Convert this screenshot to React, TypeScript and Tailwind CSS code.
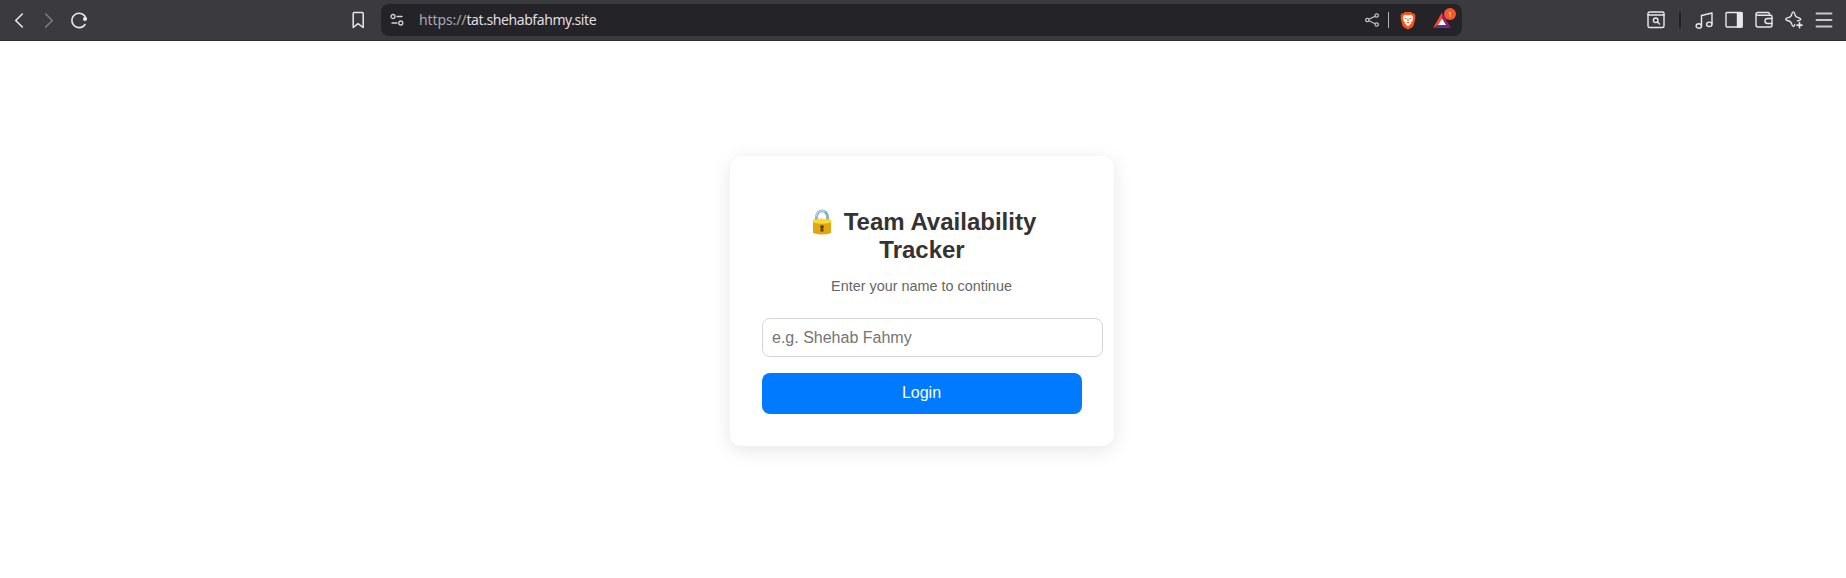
import React from "react";

type IconProps = { className?: string; children: React.ReactNode; w?: number; h?: number; sw?: number };

function Icon({ className = "text-[#e9e9ec]", children, w = 18, h = 18, sw = 1.4 }: IconProps) {
  return (
    <svg
      className={`block shrink-0 ${className}`}
      width={w}
      height={h}
      viewBox={`0 0 ${w} ${h}`}
      fill="none"
      stroke="currentColor"
      strokeWidth={sw}
      strokeLinecap="round"
      strokeLinejoin="round"
    >
      {children}
    </svg>
  );
}

function BraveLion() {
  return (
    <Icon w={16} h={19} className="text-transparent">
      <path d="M4.600 1h6.800l1.300 1.500 1.700-.1 1.100 2.300-.5 1.400.4 1.400-1.700 6.500c-.4 1.300-1 1.900-1.900 2.500L8 18.500l-3.800-2c-.9-.6-1.500-1.200-1.900-2.500L.6 7.500 1 6.100.5 4.700l1.100-2.300 1.700.1z" fill="#fb4f14" stroke="none" />
      <path d="M8 4.200 9.800 3.800l2 .3 1.500 2.100-.6 1.500.3 1.200-2 2.500.4 1.200-1.400 1-2 1.800-2-1.800-1.400-1 .4-1.200-2-2.500.3-1.200-.6-1.500 1.500-2.100 2-.3z" fill="#fff" stroke="none" />
      <path d="M4.500 6.700 6.800 7.200 6.500 8.200 4.700 7.600zM11.500 6.700 9.200 7.200l.3 1 1.800-.6zM7.600 7.500h.8l.3 2.500-.7.400-.7-.4zM6.300 11.600 8 10.900l1.700.7L8 12.500z" fill="#fb4f14" stroke="none" />
    </Icon>
  );
}

function Rewards() {
  return (
    <div className="relative h-[18px] w-[18px] shrink-0">
      <Icon className="text-transparent">
        <path d="M9 1.500 0 17l5-3 4-6.500z" fill="#ff4724" stroke="none" />
        <path d="M9 1.500 18 17l-5-3-4-6.500z" fill="#9e1f63" stroke="none" />
        <path d="M0 17h18l-5-3H5z" fill="#662d91" stroke="none" />
        <path d="M9 7.500 13 14H5z" fill="#fff" stroke="none" />
      </Icon>
      <span className="absolute -top-[3px] left-[11px] flex h-3 w-3 items-center justify-center rounded-full bg-[#fb542b] font-['Noto_Sans',sans-serif] text-[7px] leading-none text-white">
        1
      </span>
    </div>
  );
}

function Toolbar() {
  return (
    <header className="flex h-[41px] items-start border-b border-[#2b2a2e] bg-[#3b3a3f]">
      <div className="flex h-10 w-[381px] shrink-0 items-center pl-[10px]">
        <Icon sw={1.600}><path d="M12.300 3 5.700 9.500 12.300 16" /></Icon>
        <div className="w-3" />
        <Icon className="text-[#807e84]" sw={1.600}><path d="M5.700 3 12.300 9.500 5.700 16" /></Icon>
        <div className="w-3" />
        <Icon sw={1.600}>
          <path d="M15 13.500A7.200 7.200 0 1 1 16 7.500" />
          <circle cx="15" cy="8" r="2" fill="currentColor" stroke="none" />
        </Icon>
        <div className="w-[261px]" />
        <Icon sw={1.500}><path d="M5.200 1.500h8q1 0 1 1v14L9 12.700 4.200 16.500v-14q0-1 1-1z" /></Icon>
      </div>
      <div className="mt-1 flex h-8 w-[1081px] shrink-0 items-center rounded-lg bg-[#242327] pl-[9px]">
        <Icon w={14} h={14} className="text-[#d3d2d6]" sw={1.300}>
          <circle cx="3" cy="3.500" r="2" />
          <path d="M7 3.500h5M2 10h5" />
          <circle cx="10.800" cy="10" r="2" />
        </Icon>
        <div className="ml-[15px] w-[946px] whitespace-nowrap font-['Noto_Sans',sans-serif] text-[14px] leading-8 tracking-[-0.420px] text-[#e0dfe3]">
          <span className="tracking-[-0.100px] text-[#a9a8ad]">https://</span>tat.shehabfahmy.site
        </div>
        <Icon w={14} h={14} className="text-[#c0bfc4]" sw={1.200}>
          <circle cx="2.300" cy="7" r="1.700" />
          <circle cx="11.700" cy="2.500" r="1.700" />
          <circle cx="11.700" cy="11.500" r="1.700" />
          <path d="M4 6.200 10 3.400M4 7.800l6 2.900" />
        </Icon>
        <div className="ml-[9px] h-4 w-px bg-[#b5b4b9]" />
        <div className="ml-[11px]"><BraveLion /></div>
        <div className="ml-[17px]"><Rewards /></div>
      </div>
      <div className="flex h-10 flex-1 items-center pl-[185px]">
        <Icon sw={1.400}>
          <rect x="1" y="1" width="16" height="15.500" rx="1.500" />
          <path d="M1 4H17" />
          <circle cx="8.700" cy="9.300" r="2.300" />
          <path d="m10.400 11 2 2" />
        </Icon>
        <div className="ml-[14px] h-4 w-0.5 bg-[#222125]" />
        <div className="w-[14px]" />
        <Icon>
          <path d="M6.500 14.500V4.500L17 2v11" />
          <ellipse cx="3.800" cy="15" rx="2.700" ry="2.200" />
          <ellipse cx="14.300" cy="13.300" rx="2.700" ry="2.200" />
        </Icon>
        <div className="w-3" />
        <Icon>
          <rect x="1" y="1.500" width="16" height="14.500" rx="1" />
          <path d="M12.500 1.800H17V16h-4.500z" fill="currentColor" />
        </Icon>
        <div className="w-3" />
        <Icon>
          <path d="M14.500 4.200V3q0-1.500-1.500-1.500H3Q1 1.500 1 3v11q0 2 2 2h12q2 0 2-2V5.700q0-1.500-1.500-1.500H3Q1 4.200 1 3" />
          <path d="M17 7.500h-4.500a2.500 2.500 0 0 0 0 5H17" />
        </Icon>
        <div className="w-3" />
        <Icon sw={1.400}>
          <path d="M12.500 9.900Q15.700 9.100 15.700 8.200T12.600 6.400Q10.600 5.700 10 3.700 9.300.9 8.300.9T6.600 3.700Q6 5.700 4 6.400.8 7.200.8 8.200T4 10q2 .7 2.600 2.700.7 2.800 1.700 2.800t1.400-1.800" />
          <path d="M14.500 11.800v4.800M12.100 14.200h4.800" strokeWidth="1.700" />
        </Icon>
        <div className="w-3" />
        <Icon className="text-[#c9c8cc]" sw={1.800}>
          <path d="M1.500 2.500H16.500M1.500 9H16.500M1.500 15.500H16.500" />
        </Icon>
      </div>
    </header>
  );
}

function Lock() {
  return (
    <svg className="ml-[5px] mr-[13px] inline-block align-[-5px]" width="18" height="26" viewBox="0 0 18 26" fill="none">
      <path d="M3.400 12V8.200a5.600 6.300 0 0 1 11.200 0V12" stroke="#83aebf" strokeWidth="2.800" />
      <path d="M3 8.200a6 6.800 0 0 1 9-5.500" stroke="#b9d9e5" strokeWidth="1.200" />
      <path d="M0 11q9-2.500 18 0v13q-9 3-18 0z" fill="#e2a610" />
      <path d="M0 11q9-2.500 18 0v2.500q-9 2.500-18 0z" fill="#fdd835" />
      <path d="M9 16a1.900 1.900 0 0 0-1.100 3.400L7.300 22.500h3.400l-.6-3.100A1.900 1.900 0 0 0 9 16z" fill="#5d4116" />
    </svg>
  );
}

export default function App() {
  return (
    <div className="flex h-[578px] flex-col overflow-hidden bg-white font-['Liberation_Sans',Arial,sans-serif]">
      <Toolbar />
      <main className="flex flex-1 flex-col items-center pt-[115px]">
        <section className="mr-[2px] h-[290px] w-96 rounded-xl bg-white px-8 pt-[52px] text-center shadow-[0_4px_20px_rgba(0,0,0,0.1)]">
          <h1 className="text-[24px] font-bold leading-7 text-[#333]">
            <Lock />
            Team Availability<br />Tracker
          </h1>
          <p className="mr-px mt-[14px] text-[14.400px] leading-4 text-[#666]">Enter your name to continue</p>
          <input
            className="mt-6 block h-[39px] w-[341px] rounded-lg border border-[#d5d5d5] px-[9px] text-base outline-none placeholder:text-[#757575]"
            placeholder="e.g. Shehab Fahmy"
          />
          <button className="mt-4 block h-[41px] w-80 rounded-lg bg-[#007aff] pb-0.5 pr-px text-base text-white">Login</button>
        </section>
      </main>
    </div>
  );
}
